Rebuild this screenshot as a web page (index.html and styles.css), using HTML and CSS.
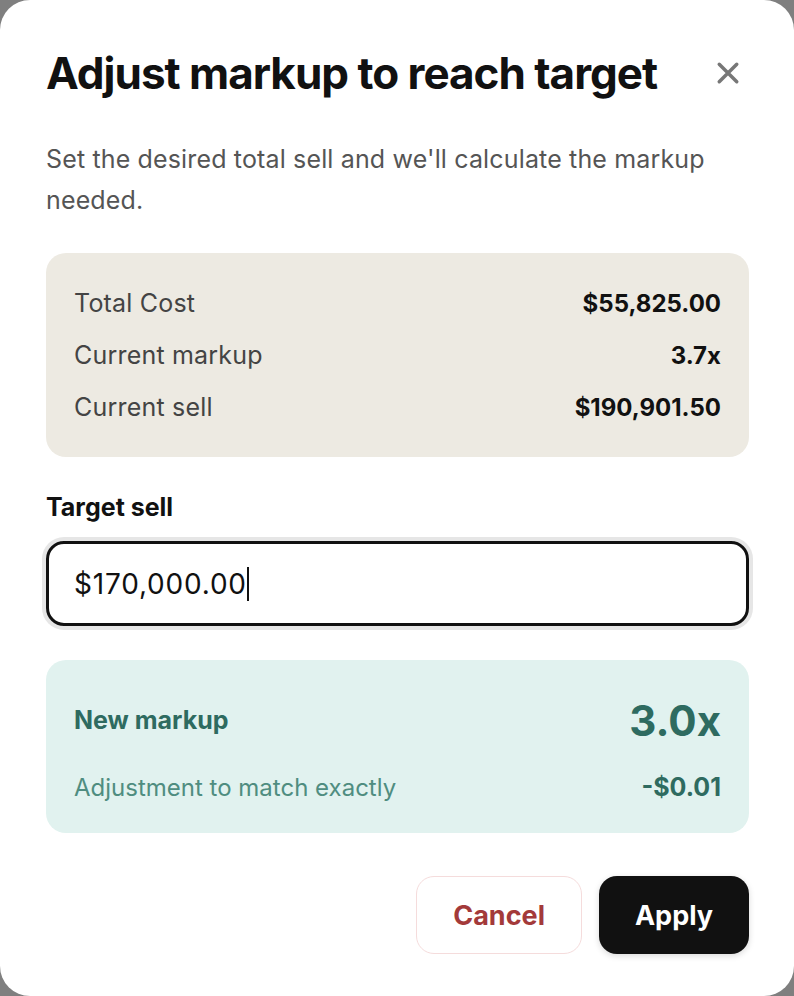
FILE: index.html
```html
<!DOCTYPE html>
<html lang="en">
<head>
    <meta charset="UTF-8">
    <meta name="viewport" content="width=device-width, initial-scale=1.0">
    <title>Adjust markup to reach target</title>
    <link rel="stylesheet" href="styles.css">
</head>
<body>
    <div class="modal">
        <div class="modal-header">
            <h1>Adjust markup to reach target</h1>
            <button class="close-btn" aria-label="Close">
                <svg width="30" height="30" viewBox="0 0 24 24" fill="none" stroke="currentColor" stroke-width="2.8" stroke-linecap="round">
                    <path d="M5 5l14 14M19 5L5 19"/>
                </svg>
            </button>
        </div>

        <p class="intro">Set the desired total sell and we'll calculate the markup needed.</p>

        <div class="summary">
            <div class="row"><span class="label">Total Cost</span><span class="value">$55,825.00</span></div>
            <div class="row"><span class="label">Current markup</span><span class="value">3.7x</span></div>
            <div class="row"><span class="label">Current sell</span><span class="value">$190,901.50</span></div>
        </div>

        <label class="field-label" for="target">Target sell</label>
        <div class="input-wrap">
            <span class="input-text">$170,000.00</span><span class="caret"></span>
        </div>

        <div class="result">
            <div class="result-row main">
                <span class="result-label">New markup</span>
                <span class="result-value">3.0x</span>
            </div>
            <div class="result-row sub">
                <span>Adjustment to match exactly</span>
                <span class="adj-value">-$0.01</span>
            </div>
        </div>

        <div class="actions">
            <button class="btn btn-cancel">Cancel</button>
            <button class="btn btn-apply">Apply</button>
        </div>
    </div>
</body>
</html>
```

FILE: styles.css
```css
html, body {
    margin: 0;
    height: 100%;
}
body {
    background: #7f7f7f;
    font-family: Inter, "Liberation Sans", sans-serif;
    color: #111;
}
.modal {
    box-sizing: border-box;
    height: 100vh;
    background: #fff;
    border-radius: 30px;
    padding: 49px 45px 0 46px;
}
.modal-header {
    display: flex;
    justify-content: space-between;
    align-items: center;
}
h1 {
    margin: 0;
    font-size: 44px;
    line-height: 48px;
    font-weight: 700;
    letter-spacing: -1px;
    color: #111;
}
.close-btn {
    background: none;
    border: 0;
    padding: 0;
    margin-right: 6px;
    color: #777;
    display: flex;
}
.intro {
    margin: 42px 0 0;
    font-size: 25px;
    line-height: 41px;
    letter-spacing: 0.15px;
    color: #555;
}
.summary {
    margin-top: 32px;
    background: #edeae2;
    border-radius: 20px;
    padding: 24px 28px;
}
.row {
    display: flex;
    justify-content: space-between;
    align-items: center;
    height: 52px;
}
.label {
    font-size: 25px;
    letter-spacing: 0.2px;
    color: #444;
}
.value {
    font-size: 24px;
    font-weight: 700;
    color: #111;
}
.field-label {
    display: block;
    margin-top: 36px;
    font-size: 25px;
    line-height: 28px;
    font-weight: 700;
}
.input-wrap {
    margin-top: 20px;
    height: 85px;
    box-sizing: border-box;
    border: 3px solid #111;
    border-radius: 18px;
    box-shadow: 0 0 0 4px #e6e6e6;
    display: flex;
    align-items: center;
    padding-left: 25px;
    font-size: 28px;
    letter-spacing: 0.8px;
}
.caret {
    display: inline-block;
    width: 2px;
    height: 34px;
    background: #111;
}
.result {
    margin-top: 34px;
    background: #e1f2ef;
    border-radius: 20px;
    padding: 32px 28px 31px;
    color: #2e6b60;
}
.result-row {
    display: flex;
    justify-content: space-between;
    align-items: center;
}
.result-row.main { height: 56px; }
.result-row.sub {
    height: 30px;
    margin-top: 24px;
    font-size: 24px;
    color: #4f8d80;
}
.result-label {
    font-size: 25px;
    font-weight: 700;
}
.result-value {
    font-size: 42px;
    font-weight: 700;
}
.adj-value {
    font-size: 25px;
    font-weight: 700;
    color: #2e6b60;
}
.actions {
    margin-top: 43px;
    display: flex;
    justify-content: flex-end;
    gap: 17px;
}
.btn {
    height: 78px;
    border-radius: 18px;
    font-family: inherit;
    font-size: 27px;
    font-weight: 700;
    padding: 0 36px;
    cursor: pointer;
}
.btn-cancel {
    background: #fff;
    border: 1.5px solid #f5dcdc;
    color: #a33a3a;
}
.btn-apply {
    background: #111;
    border: 0;
    color: #fff;
    box-shadow: 0 2px 6px rgba(0, 0, 0, 0.15);
}
```
